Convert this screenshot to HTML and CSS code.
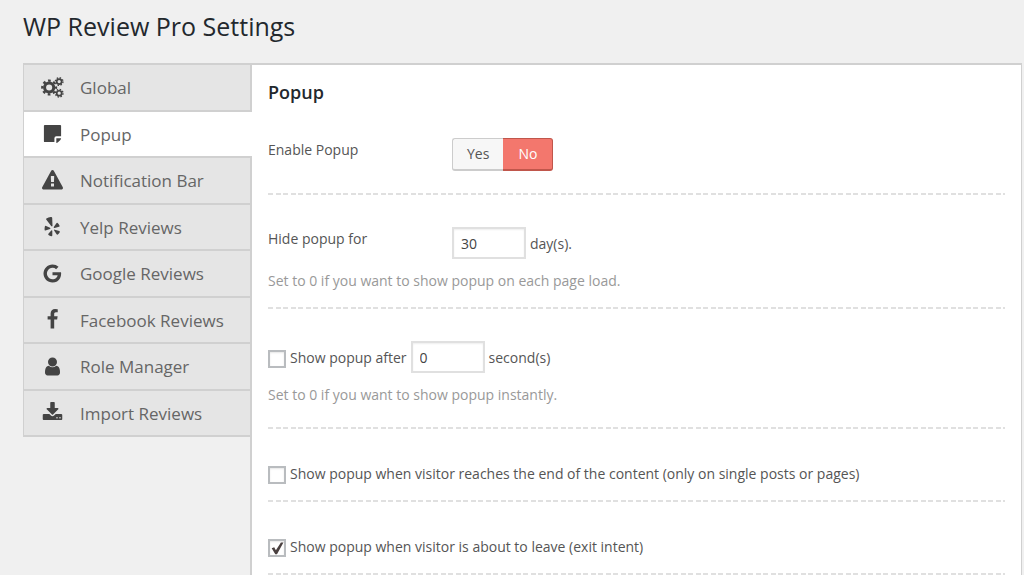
FILE: index.html
```html
<!DOCTYPE html>
<html lang="en">
<head>
<meta charset="UTF-8">
<meta name="viewport" content="width=device-width, initial-scale=1.0">
<title>WP Review Pro Settings</title>
<link rel="stylesheet" href="styles.css">
</head>
<body>

<h1 class="page-title">WP Review Pro Settings</h1>

<div class="settings">
  <nav class="tabs">
    <a class="tab" href="#global">
      <svg class="icon" viewBox="0 0 24 22" fill="none" stroke="currentColor">
        <circle cx="8.500" cy="11" r="4.800" stroke-width="3.200"/>
        <circle cx="8.500" cy="11" r="7.200" stroke-width="2.400" stroke-dasharray="2.830 2.825" stroke-dashoffset="1.400"/>
        <circle cx="19" cy="4.800" r="2.600" stroke-width="1.800"/>
        <circle cx="19" cy="4.800" r="4" stroke-width="1.400" stroke-dasharray="1.570 1.571"/>
        <circle cx="19" cy="17" r="2.600" stroke-width="1.800"/>
        <circle cx="19" cy="17" r="4" stroke-width="1.400" stroke-dasharray="1.570 1.571"/>
      </svg>
      Global
    </a>
    <a class="tab tab-active" href="#popup">
      <svg class="icon" viewBox="0 0 22 22" fill="currentColor">
        <path d="M3 2h16q1 0 1 1v11h-5q-2 0-2 2v4H3q-1 0-1-1V3q0-1 1-1z"/>
        <path d="M15 16h5q0 1-1 2l-2 2q-1 1-2 1z"/>
      </svg>
      Popup
    </a>
    <a class="tab" href="#notification-bar">
      <svg class="icon" viewBox="0 0 1792 1792" fill="currentColor">
        <path d="M1024 1375v-190q0-14-9.500-23.500t-22.500-9.500h-192q-13 0-22.500 9.500t-9.500 23.500v190q0 14 9.500 23.500t22.500 9.500h192q13 0 22.500-9.500t9.500-23.500zm-2-374l18-459q0-12-10-19-13-11-24-11h-220q-11 0-24 11-10 7-10 21l17 457q0 10 10 16.500t24 6.500h185q14 0 23.500-6.500t10.500-16.500zm-14-934l768 1408q35 63-2 126-17 29-46.500 46t-63.500 17h-1536q-34 0-63.500-17t-46.500-46q-37-63-2-126l768-1408q17-31 47-49t65-18 65 18 47 49z"/>
      </svg>
      Notification Bar
    </a>
    <a class="tab" href="#yelp">
      <svg class="icon" viewBox="0 0 22 22" fill="currentColor">
        <path d="M4.600 2.600Q7 .8 9.700 1q.9 0 1 1l.3 8.200q-.2 1.400-1.400.4L4.400 3.600q-.4-.6.200-1z"/>
        <path d="M3.700 10.300l4.700 2q1 .7 0 1.300l-4.800 1.600q-.8 0-.9-.9-.1-1.700.3-3.300.2-.7.700-.7z"/>
        <path d="M10.800 15.800v4.700q-.2.900-1.100.7-1.700-.4-2.900-1.400-.6-.6-.1-1.200l3-3.400q1-.7 1.100.6z"/>
        <path d="M13.400 14.300l4.700 1.500q.9.400.5 1.200-.8 1.600-2 2.500-.8.400-1.300-.3l-2.600-4q-.4-1.100.7-.9z"/>
        <path d="M12.300 11.500l2.800-4q.6-.7 1.300-.1 1.300 1.200 2 2.800.3.800-.6 1.100l-4.600 1.300q-1.300.1-.9-1.100z"/>
      </svg>
      Yelp Reviews
    </a>
    <a class="tab" href="#google">
      <svg class="icon" viewBox="0 0 1792 1792" fill="currentColor">
        <path d="M896 786h725q12 67 12 128 0 217-91 387.500t-259.500 266.500-386.500 96q-157 0-299-60.500t-245-163.500-163.500-245-60.500-299 60.500-299 163.500-245 245-163.500 299-60.500q300 0 515 201l-209 201q-123-119-306-119-129 0-238.500 65t-173.500 176.500-64 243.500 64 243.500 173.500 176.500 238.500 65q87 0 160-24t120-60 82-82 51.500-87 22.500-78h-436v-264z"/>
      </svg>
      Google Reviews
    </a>
    <a class="tab" href="#facebook">
      <svg class="icon" viewBox="0 0 1792 1792" fill="currentColor">
        <path d="M1343 12v264h-157q-86 0-116 36t-30 108v189h293l-39 296h-254v759h-306v-759h-255v-296h255v-218q0-186 104-288.500t277-102.500q147 0 228 12z"/>
      </svg>
      Facebook Reviews
    </a>
    <a class="tab" href="#role-manager">
      <svg class="icon" viewBox="0 0 1792 1792" fill="currentColor">
        <path d="M1536 1399q0 109-62.500 187t-150.500 78h-854q-88 0-150.500-78t-62.500-187q0-85 8.500-160.500t31.500-152 58.500-131 94-89 134.500-34.500q131 128 313 128t313-128q76 0 134.500 34.500t94 89 58.500 131 31.500 152 8.500 160.500zm-256-887q0 159-112.500 271.500t-271.500 112.500-271.500-112.500-112.500-271.500 112.500-271.500 271.500-112.500 271.500 112.500 112.500 271.500z"/>
      </svg>
      Role Manager
    </a>
    <a class="tab" href="#import">
      <svg class="icon" viewBox="0 0 1792 1792" fill="currentColor">
        <path d="M1344 1344q0-26-19-45t-45-19-45 19-19 45 19 45 45 19 45-19 19-45zm256 0q0-26-19-45t-45-19-45 19-19 45 19 45 45 19 45-19 19-45zm128-224v320q0 40-28 68t-68 28h-1472q-40 0-68-28t-28-68v-320q0-40 28-68t68-28h465l135 136q58 56 136 56t136-56l136-136h464q40 0 68 28t28 68zm-325-569q17 41-14 70l-448 448q-18 19-45 19t-45-19l-448-448q-31-29-14-70 17-39 59-39h256v-448q0-26 19-45t45-19h256q26 0 45 19t19 45v448h256q42 0 59 39z"/>
      </svg>
      Import Reviews
    </a>
  </nav>

  <form class="panel">
    <h2 class="panel-title">Popup</h2>

    <div class="row row-tall">
      <div class="field">
        <span class="field-label" id="enable-label">Enable Popup</span>
        <div class="switch" role="radiogroup" aria-labelledby="enable-label">
          <label class="switch-option"><input type="radio" name="enable" value="1"><span class="switch-text">Yes</span></label>
          <label class="switch-option"><input type="radio" name="enable" value="0" checked><span class="switch-text switch-no">No</span></label>
        </div>
      </div>
    </div>

    <div class="row">
      <div class="field">
        <label class="field-label" for="expiration">Hide popup for</label>
        <div class="inline">
          <input type="number" class="number" id="expiration" value="30">
          <span>day(s).</span>
        </div>
      </div>
      <p class="hint">Set to 0 if you want to show popup on each page load.</p>
    </div>

    <div class="row row-tall">
      <div class="inline">
        <input type="checkbox" class="check" id="after">
        <label for="after">Show popup after</label>
        <input type="number" class="number" id="delay" value="0">
        <label for="delay">second(s)</label>
      </div>
      <p class="hint">Set to 0 if you want to show popup instantly.</p>
    </div>

    <div class="row row-check">
      <div class="inline">
        <input type="checkbox" class="check" id="end">
        <label for="end">Show popup when visitor reaches the end of the content (only on single posts or pages)</label>
      </div>
    </div>

    <div class="row row-check">
      <div class="inline">
        <input type="checkbox" class="check" id="exit" checked>
        <label for="exit">Show popup when visitor is about to leave (exit intent)</label>
      </div>
    </div>
  </form>
</div>

</body>
</html>
```

FILE: styles.css
```css
* {
  box-sizing: border-box;
}
body {
  margin: 0;
  padding: 8px 2px 0 23px;
  background: #f0f0f0;
  color: #555;
  font-family: "Open Sans", "Noto Sans", sans-serif;
  font-size: 14px;
  line-height: 20px;
}
.page-title {
  margin: 0 0 19px;
  color: #23282d;
  font-size: 25px;
  font-weight: 400;
  line-height: 36px;
}
.settings {
  display: flex;
  align-items: flex-start;
}

/* left side tabs */
.tabs {
  display: grid;
  grid-auto-rows: 1fr;
  flex: none;
  width: 227px;
  min-height: 374px;
  border: 2px solid #d0d0d0;
  border-width: 2px 0 0 1px;
}
.tab {
  display: flex;
  align-items: center;
  gap: 16px;
  padding: 2px 16px 0 17px;
  border-bottom: 2px solid #d0d0d0;
  background: #e5e5e5;
  color: #666;
  font-size: 17px;
  text-decoration: none;
}
.tab-active {
  position: relative;
  margin-right: -2px;
  background: #fff;
}
.icon {
  flex: none;
  width: 23px;
  height: 21px;
  margin-bottom: 2px;
  color: #444;
}

/* right side panel */
.panel {
  flex: 1;
  padding: 15px 16px 0;
  border: 2px solid #d0d0d0;
  border-width: 2px 1px 0 2px;
  background: #fff;
}
.panel-title {
  margin: 0 0 2px;
  color: #23282d;
  font-size: 18px;
  font-weight: 600;
  line-height: 24px;
}
.row {
  padding-top: 32px;
}
.row::after {
  content: "";
  display: block;
  height: 2px;
  margin-top: 16px;
  background: repeating-linear-gradient(90deg, #e0e0e0 0 5px, transparent 5px 8px, #e0e0e0 8px 13px, transparent 13px 15px);
}
.row-tall::after {
  margin-top: 22px;
}
.row-check {
  padding-top: 33px;
}
.field {
  display: flex;
}
.field-label {
  flex: none;
  width: 184px;
  padding-top: 2px;
}
.inline {
  display: flex;
  align-items: center;
  gap: 4px;
}
.inline label,
.inline span {
  padding-top: 2px;
}
.hint {
  margin: 12px 0 0;
  color: #999;
}
.number {
  width: 74px;
  height: 32px;
  padding: 1px 7px 0;
  border: 2px solid #e0e0e0;
  background: #fff;
  box-shadow: inset 0 1px 2px rgba(0, 0, 0, 0.07);
  color: #444;
  font: inherit;
  -moz-appearance: textfield;
}
.check {
  display: grid;
  flex: none;
  width: 18px;
  height: 18px;
  margin: 4px 0 0;
  appearance: none;
  border: 2px solid #b9bcbf;
  background: #fff;
  box-shadow: inset 0 1px 2px rgba(0, 0, 0, 0.1);
}
.check:checked::before {
  content: "";
  background: #4a4040;
  clip-path: polygon(12% 52%, 30% 44%, 42% 66%, 78% 10%, 96% 10%, 50% 94%, 38% 94%);
}
.switch {
  display: flex;
}
.switch-option {
  display: flex;
  cursor: pointer;
}
.switch-option input {
  appearance: none;
  width: 0;
  height: 0;
  margin: 0;
}
.switch-text {
  padding: 0 14px;
  border: 1px solid #ccc;
  border-width: 1px 0 2px 1px;
  border-radius: 3px 0 0 3px;
  background: #f7f7f7;
  line-height: 30px;
}
.switch-no {
  padding: 0 15px;
  border-width: 1px 1px 2px 0;
  border-radius: 0 3px 3px 0;
}
input:checked + .switch-no {
  border-color: #c0564b;
  background: #f3776d;
  color: #fff;
}
```
